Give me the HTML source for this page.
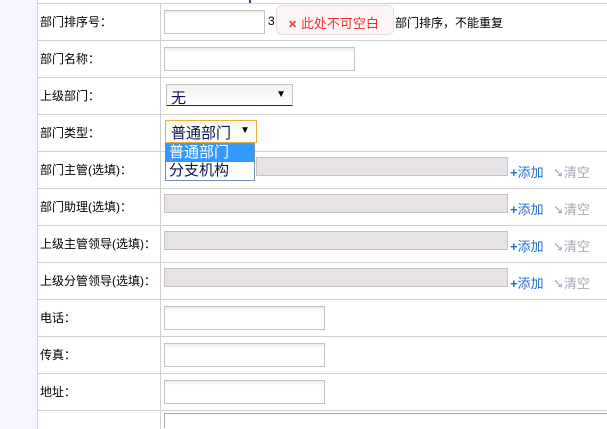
<!DOCTYPE html>
<html><head><meta charset="utf-8"><style>
html,body{margin:0;width:607px;height:429px;overflow:hidden}
body{background:#f5f6fd;font-family:"Liberation Sans","Noto Sans CJK SC",sans-serif;font-size:12px;color:#000;position:relative}
.main{position:absolute;left:37px;top:0;width:570px;height:429px;background:#fff;border-left:1px solid #d0d0d0}
.h{position:absolute;left:37px;width:570px;height:1px;background:#d0d0d0}
.v{position:absolute;left:160px;top:3px;width:1px;height:426px;background:#d0d0d0}
.lab{position:absolute;left:40px;line-height:14px}
.inp{position:absolute;box-sizing:border-box;border:1px solid #c8c0bc;background:linear-gradient(#e8eef2,#fff 4px);height:24px}
.ta{position:absolute;left:164px;width:344px;height:19px;box-sizing:border-box;border:1px solid #c8c0bc;background:#e6e2e6}
.add{position:absolute;left:510px;color:#1e6fd0;font-size:13px}
.clr{position:absolute;left:553px;color:#a0a8b4;font-size:13px}
.sel{position:absolute;box-sizing:border-box;font-size:15px;color:#101050}
</style></head><body>
<div class="main"></div>
<div style="position:absolute;left:249px;top:0;width:2px;height:3px;background:#1e4a80"></div>
<div class="h" style="top:3px"></div>
<div class="h" style="top:40px"></div><div class="h" style="top:77px"></div><div class="h" style="top:114px"></div><div class="h" style="top:151px"></div><div class="h" style="top:188px"></div><div class="h" style="top:225px"></div><div class="h" style="top:262px"></div><div class="h" style="top:299px"></div><div class="h" style="top:336px"></div><div class="h" style="top:373px"></div><div class="h" style="top:410px"></div>
<div class="v"></div>
<div class="lab" style="top:15px">部门排序号：</div>
<div class="lab" style="top:52px">部门名称：</div>
<div class="lab" style="top:89px">上级部门：</div>
<div class="lab" style="top:126px">部门类型：</div>
<div class="lab" style="top:163px">部门主管(选填)：</div>
<div class="lab" style="top:200px">部门助理(选填)：</div>
<div class="lab" style="top:237px">上级主管领导(选填)：</div>
<div class="lab" style="top:274px">上级分管领导(选填)：</div>
<div class="lab" style="top:311px">电话：</div>
<div class="lab" style="top:348px">传真：</div>
<div class="lab" style="top:385px">地址：</div>
<div class="inp" style="left:164px;top:10px;width:101px"></div>
<div style="position:absolute;left:268px;top:14px">3</div>
<div style="position:absolute;left:395px;top:14px;font-size:12px">部门排序，不能重复</div>
<div style="position:absolute;left:276px;top:5px;width:118px;height:30px;box-sizing:border-box;border:1px solid #e6dcdf;border-radius:6px;background:#fdf6f8"></div>
<div style="position:absolute;left:288px;top:13px;color:#f03030;font-size:13px"><b style="font-size:11px">✕</b> 此处不可空白</div>
<div class="inp" style="left:164px;top:47px;width:191px"></div>
<div class="sel" style="left:166px;top:84px;width:127px;height:22px;border:1px solid #c8c0bc;border-bottom:1px solid #202060;background:linear-gradient(#eef2ee,#fff);padding:2px 0 0 4px">无<span style="position:absolute;right:6px;top:4px;font-size:10px;color:#000">▼</span></div>
<div class="sel" style="left:165px;top:120px;width:92px;height:23px;border:1px solid #e8b040;background:linear-gradient(#f6f8e8,#fff);padding:1px 0 0 5px">普通部门<span style="position:absolute;right:6px;top:4px;font-size:10px;color:#000">▼</span></div>
<div class="sel" style="left:165px;top:143px;width:90px;height:38px;border:1px solid #7090b0;background:#fff;line-height:18px">
<div style="background:#3399ff;color:#fff;padding-left:3px">普通部门</div><div style="padding-left:3px">分支机构</div></div>
<div class="ta" style="top:157px;left:256px;width:252px"></div>
<div class="ta" style="top:194px"></div>
<div class="ta" style="top:231px"></div>
<div class="ta" style="top:268px"></div>
<div class="add" style="top:162px"><b>+</b>添加</div><div class="clr" style="top:162px">➘清空</div>
<div class="add" style="top:199px"><b>+</b>添加</div><div class="clr" style="top:199px">➘清空</div>
<div class="add" style="top:236px"><b>+</b>添加</div><div class="clr" style="top:236px">➘清空</div>
<div class="add" style="top:273px"><b>+</b>添加</div><div class="clr" style="top:273px">➘清空</div>
<div class="inp" style="left:164px;top:306px;width:161px"></div>
<div class="inp" style="left:164px;top:343px;width:161px"></div>
<div class="inp" style="left:164px;top:380px;width:161px"></div>
<div style="position:absolute;left:164px;top:413px;width:450px;height:14px;border:1px solid #aaa;border-bottom:none"></div>
</body></html>
